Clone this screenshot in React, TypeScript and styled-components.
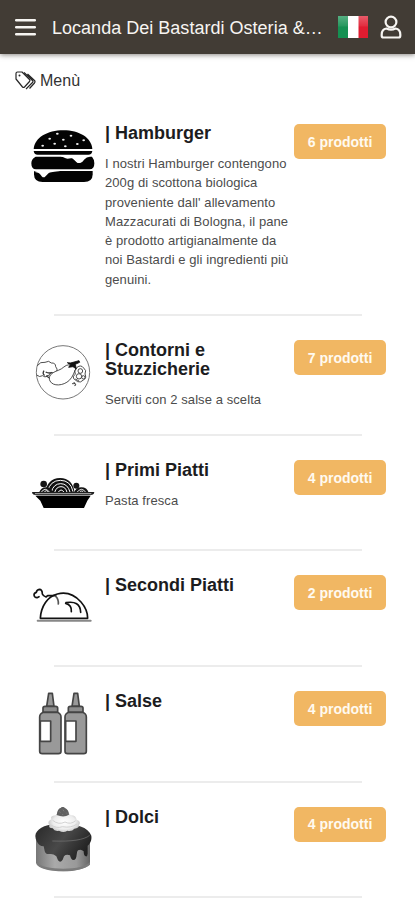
import React from 'react';
import styled, { createGlobalStyle } from 'styled-components';

const GlobalStyle = createGlobalStyle`
  * { box-sizing: border-box; }
  html, body { margin: 0; background: #fff; overflow: hidden; }
  body { font-family: "Liberation Sans", Arial, sans-serif; color: #1c1c1e; }
`;

const Page = styled.div`
  width: 415px;
  height: 900px;
  overflow: hidden;
  background: #fff;
`;

const Header = styled.header`
  height: 54px;
  padding: 0 13px 0 15px;
  display: flex;
  align-items: center;
  background: #423c35;
  box-shadow: 0 1px 5px rgba(40, 35, 28, 0.55);
`;

const Brand = styled.h1`
  margin: 2px 0 0 16px;
  width: 272px;
  font-size: 18px;
  font-weight: 400;
  letter-spacing: 0.02px;
  white-space: nowrap;
  color: #f7f5f2;
`;

const FlagSlot = styled.span`
  display: flex;
  margin-left: 14px;
`;

const ProfileSlot = styled.span`
  display: flex;
  margin-left: auto;
`;

const Crumb = styled.nav`
  height: 45px;
  padding: 8px 0 0 15px;
  display: flex;
  align-items: center;
  gap: 4px;
  font-size: 16px;
  color: #333;
`;

const CrumbText = styled.span`
  padding-top: 1px;
`;

const List = styled.main`
  display: flex;
  flex-direction: column;
`;

const ProductButton = styled.button`
  width: 92px;
  height: 35px;
  padding: 0;
  border: 0;
  border-radius: 5px;
  background: #f1b763;
  color: #fffaf0;
  font: 700 14px "Liberation Sans", Arial, sans-serif;
`;

const Row = styled.section<{ $height: number }>`
  height: ${(p) => p.$height}px;
  padding: 25px 29px 0 30px;
  display: grid;
  grid-template-columns: 66px 190px 92px;
  grid-template-rows: 1fr 2px;
  column-gap: 4px;

  &:not(:first-child) > svg,
  &:not(:first-child) > ${ProductButton} {
    margin-top: -1px;
  }
`;

const Info = styled.div`
  padding-left: 5px;
`;

const Title = styled.h2`
  margin: 0;
  font-size: 18px;
  line-height: 19px;
  font-weight: 700;
  letter-spacing: 0;
`;

const Description = styled.p`
  margin: 11px 0 0;
  font-size: 13px;
  line-height: 19.25px;
  letter-spacing: 0.08px;
  color: #4c4c4c;
  white-space: nowrap;
`;

const Divider = styled.hr`
  grid-column: 1 / -1;
  width: 308px;
  height: 2px;
  margin: 0 0 0 24px;
  border: 0;
  background: #ececec;
`;

const MenuIcon = () => (
  <svg width="21" height="18" viewBox="0 0 21 18">
    <path d="M1.200 2.200h18.600M1.200 9.200h18.600M1.200 16.200h18.600" stroke="#f7f5f2" strokeWidth="2.500" strokeLinecap="round" />
  </svg>
);

const Flag = () => (
  <svg width="31" height="24" viewBox="0 0 31 24">
    <defs>
      <linearGradient id="shine" x1="0" y1="0" x2="0" y2="1">
        <stop offset="0" stopColor="#fff" stopOpacity=".28" />
        <stop offset=".45" stopColor="#fff" stopOpacity=".08" />
        <stop offset=".5" stopColor="#fff" stopOpacity="0" />
      </linearGradient>
    </defs>
    <path d="M0 1h10.5v22H0z" fill="#159052" />
    <path d="M10 1h11v22H10z" fill="#fff" />
    <path d="M20.5 1H30v22h-9.500z" fill="#df1c30" />
    <path d="M0 1h30v22H0z" fill="url(#shine)" />
  </svg>
);

const ProfileIcon = () => (
  <svg width="22" height="24" viewBox="0 0 22 24" fill="none" stroke="#f7f5f2" strokeWidth="2.200">
    <circle cx="11" cy="7" r="5.4" />
    <path d="M6.500 13.500C3.500 14 1.700 16.500 1.700 19.500v1.200q0 1.800 1.800 1.800h15q1.800 0 1.800-1.800v-1.200c0-3-1.800-5.500-4.800-6q-4.500 2.200-9 0z" strokeLinejoin="round" />
  </svg>
);

const TagsIcon = () => (
  <svg width="21" height="19" viewBox="0 0 21 19" fill="none" stroke="#262626" strokeWidth="1.2" strokeLinejoin="round">
    <path d="M1 2.500Q1 1 2.500 1H7l7.500 7.500q1 1 0 2l-5 5.500q-1 1-2 0L1 8z" />
    <path d="M9 1.500l8.500 8q1 1 0 2l-6.500 6.500M12.500 3l7 6.500q1 1.200 0 2.500l-5 5.500" />
    <circle cx="4.500" cy="4.500" r="1" fill="#262626" stroke="none" />
  </svg>
);

const Burger = () => (
  <svg width="66" height="80" viewBox="30 27 198 240">
    <path d="M41 102C44 68 82 46 130 46s84 22 87 56z" fill="#030303" />
    <path d="M41 108h176q-1 11-12 11H53q-11 0-12-11z" fill="#030303" />
    <path d="M47 125h75l35 3q12 16 22 15 8-1 13-9 8-9 18-9h6q7 8 7 20 0 18-14 18H48q-14 0-14-18 0-14 13-20z" fill="#030303" />
    <path d="M120 122h83c-11 2-11 20-24 22-11 1-10-8-20-13-8-4-13 2-22-1z" fill="#fff" />
    <path d="M42 168h176v10q0 23-26 23H68q-26 0-26-23z" fill="#030303" />
    <path d="M54 167h70c-22 4-33 2-40 9-7 6-8 11-14 11-5 0-7-11-16-14l-12-3z" fill="#fff" />
    <g fill="#eee">
      <ellipse cx="112" cy="56" rx="4" ry="3" /><ellipse cx="153" cy="62" rx="4" ry="3" />
      <ellipse cx="89" cy="71" rx="4" ry="3" /><ellipse cx="130" cy="74" rx="4" ry="3" />
      <ellipse cx="191" cy="76" rx="4" ry="3" /><ellipse cx="104" cy="86" rx="4" ry="3" />
      <ellipse cx="172" cy="87" rx="4" ry="3" /><ellipse cx="68" cy="92" rx="4" ry="3" />
      <ellipse cx="136" cy="94" rx="4" ry="3" />
    </g>
  </svg>
);

const Vegetables = () => (
  <svg width="66" height="80" viewBox="30 30 198 240" fill="none" stroke="#333" strokeWidth="2.600">
    <circle cx="129" cy="127" r="80" stroke="#777" strokeWidth="3" />
    <path d="M52 107q9-13 23-10 12-7 19 2 13-1 13 11 7 7 3 15-9 7-17 2-4 12-12 10-5 8-13 0-10 6-18-2" />
    <path d="M72 122q-6 10 2 14m3-10q9 5 18 2m-17 10q8 4 13 7" strokeWidth="4" />
    <path d="M148 104c-15 1-18 12-33 17-21 7-32 18-25 32 9 17 40 15 58-2 12-12 15-27 20-36" fill="#fff" />
    <path d="M142 98q11 2 17-1l18-5 2 5-13 6 3 14-10-7-13 2 5-8z" fill="#111" stroke="#111" />
    <g strokeWidth="2.600">
      <path d="M171 112q12-9 20 2 10 7 4 18 6 13-5 18-8 9-17 5l-12-9q-5-8 5-13-6-11 5-21z" />
      <circle cx="181" cy="123" r="7" /><circle cx="177" cy="139" r="8" /><circle cx="190" cy="142" r="5" />
      <path d="M166 147l11 6m-21 8h9l-3-4 6 8-5 2" />
    </g>
  </svg>
);

const Pasta = () => (
  <svg width="66" height="80" viewBox="30 0 198 240">
    <path d="M75 98C80 70 94 55 120 54c26 0 40 16 44 44z" fill="#111" />
    <g fill="none" stroke="#fff" strokeWidth="3">
      <path d="M82 95q9-34 39-34 31 0 38 34M94 96q7-25 28-25t28 25M104 97q5-17 19-17t18 17" />
      <path d="M114 98q9-16 19 0" />
    </g>
    <g fill="#151515"><circle cx="71" cy="72" r="10" /><circle cx="169" cy="77" r="9" /><path d="M57 98q6-16 22-16 15 0 19 16m64 0q6-16 22-16 17 0 22 16" /></g>
    <path d="M63 98q12-20 27 0M72 98q7-12 14 0M170 98q15-20 28 0M178 98q7-10 13 0" fill="none" stroke="#eee" strokeWidth="3" />
    <path d="M36 96h187q0 10-17 10H53Q36 106 36 96z" fill="#202020" />
    <path d="M45 101h169" stroke="#999" strokeWidth="4" />
    <path d="M46 107h166l-10 15-10 22H71l-10-22z" fill="#000" />
  </svg>
);

const Roast = () => (
  <svg width="66" height="80" viewBox="30 0 198 240" fill="none" stroke="#111" strokeWidth="5" strokeLinecap="round" strokeLinejoin="round">
    <path d="M61 130C63 94 83 64 112 57c27-7 53 4 71 24 14 16 20 31 20 49z" />
    <path d="M107 62H83l-5 4q-8-2-11-9 0-14-9-14-8 1-9 9-7 2-7 8 1 8 9 8l6-3" />
    <path d="M107 64q9 8 8 23" stroke="#555" />
    <path d="M137 85q19 5 17 25M138 83c27-5 43 4 44 29" />
    <path d="M53 137h159" stroke="#888" strokeWidth="6" />
  </svg>
);

const Bottle = ({ shift = 0 }: { shift?: number }) => (
  <g transform={`translate(${shift} 0)`} stroke="#454545" strokeWidth="5" strokeLinejoin="round">
    <path d="M86 40h11l5 39H80z" fill="#999" />
    <path d="M75 79h32q6 0 6 5v13H69V84q0-5 6-5z" fill="#8d8d8d" />
    <path d="M70 97h42q11 4 11 14v103q0 7-8 7H67q-8 0-8-7V111q0-10 11-14z" fill="#999" />
    <path d="M61 123h31v61H61z" fill="#fff" />
  </g>
);

const Sauces = () => (
  <svg width="66" height="80" viewBox="30 33 198 240">
    <Bottle />
    <Bottle shift={76} />
  </svg>
);

const Cake = () => (
  <svg width="66" height="80" viewBox="30 36 198 240">
    <defs>
      <linearGradient id="sponge"><stop stopColor="#777" /><stop offset=".35" stopColor="#aaa" /><stop offset=".75" stopColor="#999" /><stop offset="1" stopColor="#666" /></linearGradient>
      <linearGradient id="icing" x1="0" x2="1" y1="0" y2=".5"><stop stopColor="#282828" /><stop offset=".55" stopColor="#494949" /><stop offset="1" stopColor="#222" /></linearGradient>
      <radialGradient id="cream"><stop stopColor="#fff" /><stop offset=".7" stopColor="#eee" /><stop offset="1" stopColor="#ccc" /></radialGradient>
    </defs>
    <path d="M48 125v77c4 15 36 27 82 27s77-11 80-27v-78z" fill="url(#sponge)" />
    <path d="M49 201c13 14 42 20 81 20s68-7 80-20v8c-14 12-43 20-80 20-42 0-75-9-81-22z" fill="#7c7c7c" />
    <path d="M46 123c1-20 27-34 61-36 49-3 97 6 107 35 2 14-4 24-11 30v24q-1 10-6 8-6-1-6-15-8-8-17-3-3 3-4 13-1 16-10 16-7 0-10-14-12-4-18 3l-4 10q-7 11-14 2l-5-12q-10-9-20-7-13 2-15-9l-3-14q-15-2-20-14-5-8-5-17z" fill="url(#icing)" />
    <path d="M97 138c57 2 95-3 112-17" stroke="#777" strokeWidth="2" fill="none" />
    <path d="M88 91q-8-12 6-18-5-10 13-12 7-11 22-10 18-1 23 10 15-1 18 13 15 5 7 16 1 10-14 11-7 9-21 6-12 8-25 0-13 3-19-7-13 0-10-9z" fill="url(#cream)" />
    <path d="M98 76q18 15 37 5 17 9 32-4M91 89q20 13 36 6 26 5 44-8" fill="none" stroke="#d2d2d2" strokeWidth="3" />
    <path d="M110 60q2-20 13-22 4-5 11 0 13 6 13 21-15 10-37 1z" fill="#616161" />
    <path d="M118 49l3 4m8-9l3 5m7 4l2 3m-14 1l2 3" stroke="#888" strokeWidth="2" />
  </svg>
);

const categories = [
  { title: 'Hamburger', count: 6, height: 217, Icon: Burger, lines: ['I nostri Hamburger contengono', '200g di scottona biologica', "proveniente dall' allevamento", 'Mazzacurati di Bologna, il pane', 'è prodotto artigianalmente da', 'noi Bastardi e gli ingredienti più', 'genuini.'] },
  { title: 'Contorni e Stuzzicherie', count: 7, height: 120, Icon: Vegetables, lines: ['Serviti con 2 salse a scelta'] },
  { title: 'Primi Piatti', count: 4, height: 115, Icon: Pasta, lines: ['Pasta fresca'] },
  { title: 'Secondi Piatti', count: 2, height: 116, Icon: Roast, lines: [] },
  { title: 'Salse', count: 4, height: 115.5, Icon: Sauces, lines: [] },
  { title: 'Dolci', count: 4, height: 115.5, Icon: Cake, lines: [] },
];

export default function App() {
  return (
    <Page>
      <GlobalStyle />
      <Header>
        <MenuIcon />
        <Brand>Locanda Dei Bastardi Osteria &amp;…</Brand>
        <FlagSlot><Flag /></FlagSlot>
        <ProfileSlot><ProfileIcon /></ProfileSlot>
      </Header>
      <Crumb><TagsIcon /><CrumbText>Menù</CrumbText></Crumb>
      <List>
        {categories.map(({ title, count, height, Icon, lines }) => (
          <Row key={title} $height={height}>
            <Icon />
            <Info>
              <Title>| {title}</Title>
              {lines.length > 0 && (
                <Description>
                  {lines.map((line) => <React.Fragment key={line}>{line}<br /></React.Fragment>)}
                </Description>
              )}
            </Info>
            <ProductButton>{count} prodotti</ProductButton>
            <Divider />
          </Row>
        ))}
      </List>
    </Page>
  );
}
